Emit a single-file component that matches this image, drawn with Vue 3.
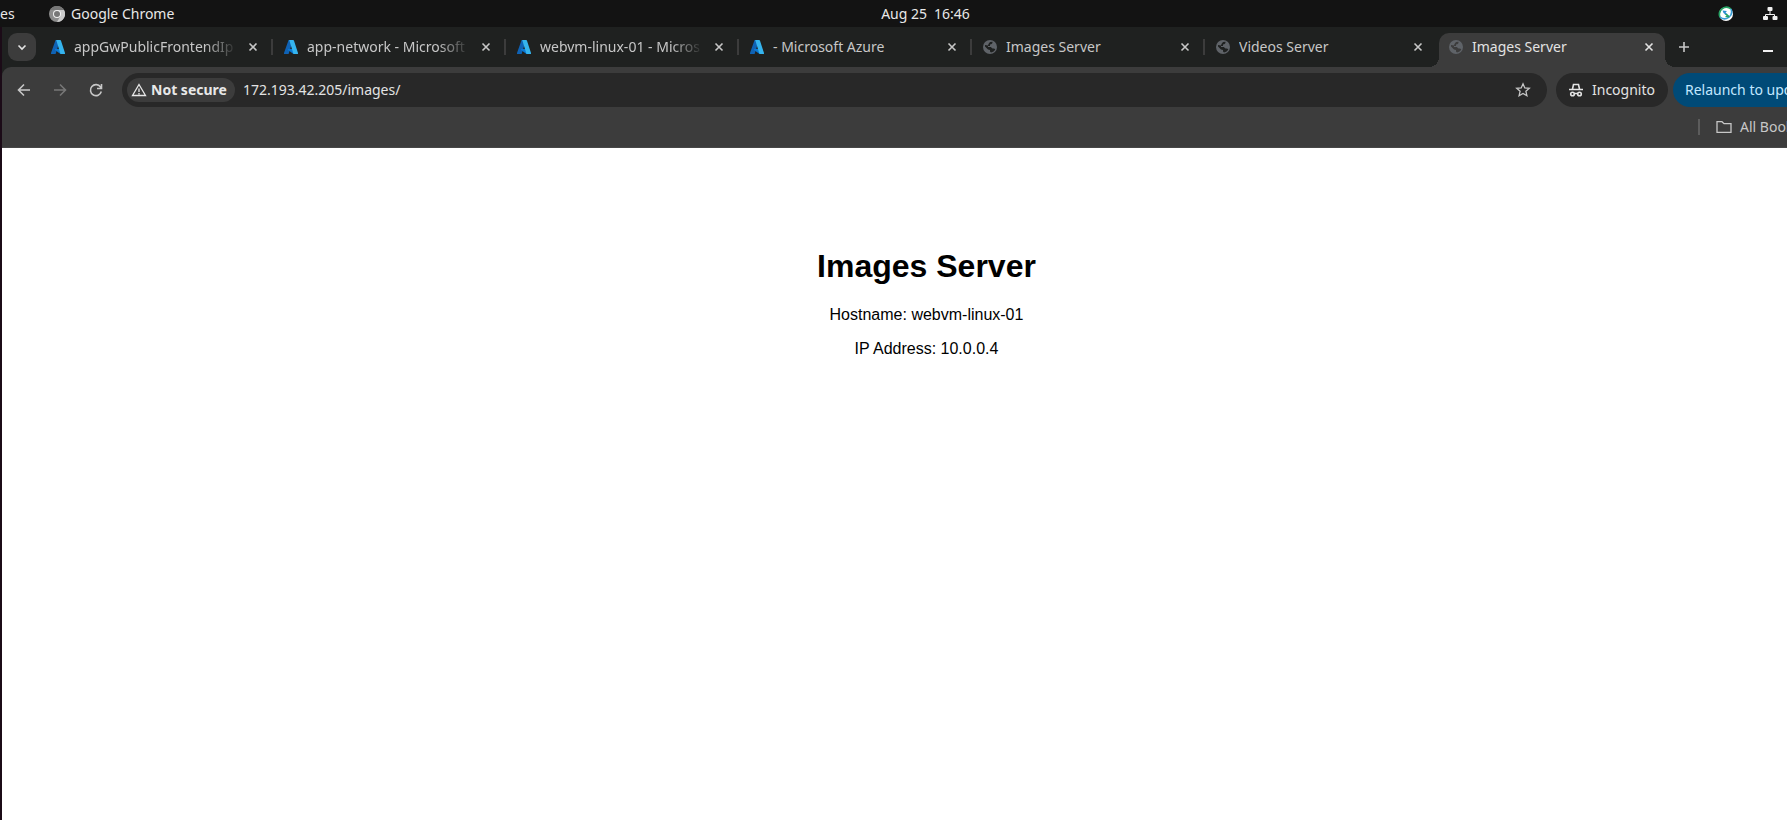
<script setup>
import { ref } from 'vue'

const address = ref('172.193.42.205/images/')
const tabs = [
  { title: 'appGwPublicFrontendIp', icon: 'azure', faded: true },
  { title: 'app-network - Microsoft', icon: 'azure', faded: true },
  { title: 'webvm-linux-01 - Micros', icon: 'azure', faded: true },
  { title: '- Microsoft Azure', icon: 'azure' },
  { title: 'Images Server', icon: 'globe' },
  { title: 'Videos Server', icon: 'globe', beforeActive: true },
  { title: 'Images Server', icon: 'globe', active: true },
]
</script>

<template>
  <div class="screen">
    <div class="desktop">
      <header class="system-bar">
        <div class="system-left">
          <span class="activities">es</span>
          <svg class="chrome-logo" viewBox="0 0 16 16" aria-hidden="true">
            <circle cx="8" cy="8" r="8" fill="#8c8c8c" />
            <path d="M8 4h7A8 8 0 0 1 8 16l3.5-6z" fill="#c9c9c9" />
            <path d="M1 4a8 8 0 0 1 14 0H8z" fill="#777" />
            <circle cx="8" cy="8" r="4" fill="#f2f2f2" />
            <circle cx="8" cy="8" r="3" fill="#777" />
          </svg>
          <span>Google Chrome</span>
        </div>
        <time class="clock"><span>Aug 25</span><span>16:46</span></time>
        <div class="system-right">
          <svg class="tray-sync" viewBox="0 0 16 16" aria-hidden="true">
            <circle cx="8" cy="8" r="7" fill="#fff" />
            <path d="M2 11A7 7 0 0 1 13 3" fill="none" stroke="#27a566" stroke-width="1.6" />
            <path d="M13 3A7 7 0 0 1 2 11" fill="none" stroke="#3a9fd6" stroke-width="1.6" />
            <path d="M4.500 4.500L9 5 7.500 6.500 10 8.500H7.500L5.500 7z" fill="#2b8fd0" />
            <path d="M11.500 11.500L7 11l1.500-1.500L6.500 8H9l2 1.500z" fill="#27a566" />
          </svg>
          <svg class="tray-net" viewBox="0 0 16 16" aria-hidden="true">
            <path d="M8 5v3.500M3.500 11V8.500h9V11" fill="none" stroke="#f2f2f2" />
            <rect x="5.500" y="1" width="5" height="4" rx="1" fill="#f2f2f2" />
            <rect x="1" y="10" width="5" height="4" rx="1" fill="#f2f2f2" />
            <rect x="10.500" y="10" width="5" height="4" rx="1" fill="#f2f2f2" />
          </svg>
        </div>
      </header>

      <div class="browser">
        <nav class="tab-strip" aria-label="Tabs">
          <button class="tab-search" aria-label="Search tabs">
            <svg viewBox="0 0 16 16" class="icon"><path d="M4.500 6.500L8 10l3.500-3.500" /></svg>
          </button>
          <div
            v-for="(tab, i) in tabs"
            :key="i"
            class="tab"
            :class="{ active: tab.active, plain: tab.beforeActive }"
          >
            <div class="tab-body">
              <svg v-if="tab.icon === 'azure'" class="favicon" viewBox="0 0 14 14" aria-hidden="true">
                <path d="M4.600 0H9L4.600 14H.8a.8.8 0 0 1-.8-1z" fill="#0f62b4" />
                <path d="M4 9h6l2 5H9.500L4 10z" fill="#0a78d4" />
                <path d="M5.200 0H9a1 1 0 0 1 1 .8L14 13a.8.8 0 0 1-.8 1H9.500z" fill="#35b4ee" />
              </svg>
              <svg v-else class="favicon" viewBox="0 0 14 14" aria-hidden="true">
                <circle cx="7" cy="7" r="7" class="globe" />
                <path
                  d="M9.500 1.800C9.800 3.500 8.500 4.500 7 4.500V6H5v1h3l1.500 1.500H11l1.300.8C11.500 11 10 12.200 8 12.500L7 11.500V10L5 9.500 2 6.500V5l3 .5L5.500 4 7 2z"
                  class="land"
                />
                <path d="M7.500 5.500L10 4.500l2 1.500-1 2H9z" class="globe" />
              </svg>
              <a href="#" class="tab-title" :class="{ faded: tab.faded }">{{ tab.title }}</a>
              <button class="tab-close" :aria-label="'Close ' + tab.title">
                <svg viewBox="0 0 16 16" class="icon"><path d="M4.500 4.500l7 7M11.500 4.500l-7 7" /></svg>
              </button>
            </div>
          </div>
          <button class="new-tab" aria-label="New tab">
            <svg viewBox="0 0 16 16" class="icon"><path d="M8 3v10M3 8h10" /></svg>
          </button>
          <button class="minimize" aria-label="Minimize"><span></span></button>
        </nav>

        <div class="toolbar">
          <div class="nav-buttons">
            <button aria-label="Back">
              <svg viewBox="0 0 16 16" class="icon"><path d="M14 8H3M8 2.500L2.500 8 8 13.500" /></svg>
            </button>
            <button aria-label="Forward" disabled>
              <svg viewBox="0 0 16 16" class="icon"><path d="M2 8h11M8 2.500L13.500 8 8 13.500" /></svg>
            </button>
            <button aria-label="Reload">
              <svg viewBox="0 0 16 16" class="icon"><path d="M13.300 9.500A5.500 5.500 0 1 1 12.500 5L13.500 6M13.500 2v4.500H9" /></svg>
            </button>
          </div>
          <div class="omnibox">
            <button class="security">
              <svg viewBox="0 0 16 16" class="icon thin"><path d="M8 2.500L14.500 13.500h-13zM8 6.500v3.500M8 11v1.500" /></svg>
              <span>Not secure</span>
            </button>
            <input v-model="address" class="address" aria-label="Address" spellcheck="false" />
            <button class="star" aria-label="Bookmark this page">
              <svg viewBox="0 0 16 16" class="icon thin"><path d="M8 1.800l1.800 4.100 4.500.4-3.400 3 1 4.400L8 11.400l-3.900 2.300 1-4.400-3.400-3 4.500-.4z" /></svg>
            </button>
          </div>
          <button class="incognito">
            <svg viewBox="0 0 16 16" class="icon">
              <path d="M4.500 7L5.500 2.500h5L11.500 7M1 7.500h14M6 11.500h4" />
              <circle cx="4.500" cy="12" r="1.800" /><circle cx="11.500" cy="12" r="1.800" />
            </svg>
            <span>Incognito</span>
          </button>
          <button class="relaunch">Relaunch to update</button>
        </div>

        <div class="bookmarks">
          <button class="all-bookmarks">
            <svg viewBox="0 0 16 16" class="icon thin"><path d="M1 2.700h5l2 2h7v8.600H1z" /></svg>
            <span>All Bookmarks</span>
          </button>
        </div>

        <main class="page">
          <h1>Images Server</h1>
          <p>Hostname: webvm-linux-01</p>
          <p>IP Address: 10.0.0.4</p>
        </main>
      </div>
    </div>
  </div>
</template>

<style>
body {
  background: #fff;
}
</style>

<style scoped>
.screen {
  overflow: hidden;
  min-height: 100vh;
  display: flex;
}
.desktop {
  flex: 1;
  margin-right: -64px;
  display: flex;
  flex-direction: column;
  font: 14px/20px "Noto Sans", "Open Sans", sans-serif;
  color: #e8e8e8;
  background: #1b0b17;
}
button {
  border: 0;
  padding: 0;
  margin: 0;
  background: none;
  color: inherit;
  font: inherit;
  display: flex;
  align-items: center;
  justify-content: center;
  flex: none;
  white-space: nowrap;
}
.icon {
  width: 16px;
  height: 16px;
  flex: none;
  fill: none;
  stroke: currentColor;
  stroke-width: 1.6;
}
.icon.thin {
  stroke-width: 1.3;
}
.system-bar {
  height: 27px;
  display: grid;
  grid-template-columns: 1fr auto 1fr;
  align-items: center;
  background: #131313;
}
.system-left {
  display: flex;
  align-items: center;
}
.activities {
  width: 49px;
}
.chrome-logo {
  width: 16px;
  height: 16px;
  margin-right: 6px;
}
.clock {
  display: flex;
  gap: 7px;
}
.system-right {
  display: flex;
  justify-content: flex-end;
  align-items: center;
  gap: 28px;
  padding-right: 73px;
}
.tray-sync,
.tray-net {
  width: 16px;
  height: 16px;
}
.browser {
  flex: 1;
  margin-left: 2px;
  display: flex;
  flex-direction: column;
  background: #1f2120;
}
.tab-strip {
  height: 40px;
  display: flex;
  align-items: flex-end;
  color: #c7c7c7;
}
.tab-search {
  width: 28px;
  height: 28px;
  margin: 0 5px 6px 6px;
  border-radius: 9px;
  background: #3c3c3c;
  color: #e3e3e3;
}
.tab {
  flex: none;
  width: 233px;
  height: 34px;
  position: relative;
}
.tab:not(.active):not(.plain)::after {
  content: "";
  position: absolute;
  right: 1px;
  top: 6px;
  width: 2px;
  height: 16px;
  background: #3c3c3c;
}
.tab-body {
  width: 228px;
  height: 34px;
  padding: 0 8px 6px 10px;
  box-sizing: border-box;
  display: flex;
  align-items: center;
}
.active .tab-body {
  width: 226px;
  background: #3c3c3c;
  border-radius: 10px 10px 0 0;
  color: #e3e3e3;
}
.active .tab-body::before,
.active .tab-body::after {
  content: "";
  position: absolute;
  bottom: 0;
  width: 10px;
  height: 10px;
}
.active .tab-body::before {
  left: -10px;
  background: radial-gradient(circle at 0 0, transparent 10px, #3c3c3c 10px);
}
.active .tab-body::after {
  left: 226px;
  background: radial-gradient(circle at 100% 0, transparent 10px, #3c3c3c 10px);
}
.favicon {
  width: 14px;
  height: 14px;
  flex: none;
  margin-right: 9px;
}
.globe {
  fill: #5f6368;
}
.land {
  fill: #1f2120;
}
.active .land {
  fill: #3c3c3c;
}
.tab-title {
  flex: 1;
  min-width: 0;
  overflow: hidden;
  white-space: nowrap;
  color: inherit;
  text-decoration: none;
  margin-right: 8px;
}
.faded {
  mask-image: linear-gradient(to left, transparent, #000 32px);
}
.tab-close {
  width: 16px;
  height: 16px;
}
.new-tab {
  width: 24px;
  height: 28px;
  margin-bottom: 6px;
}
.minimize {
  width: 28px;
  height: 28px;
  margin: 0 0 6px 58px;
}
.minimize span {
  width: 10px;
  height: 2px;
  margin-top: 8px;
  background: #f0f0f0;
}
.toolbar {
  height: 46px;
  padding-left: 8px;
  display: flex;
  align-items: center;
  background: #3c3c3c;
  border-top-left-radius: 9px;
}
.nav-buttons {
  display: flex;
  gap: 8px;
  margin-right: 12px;
  color: #c7c7c7;
}
.nav-buttons button {
  width: 28px;
  height: 28px;
}
.nav-buttons button:disabled {
  color: #777;
}
.omnibox {
  flex: 1;
  height: 34px;
  min-width: 0;
  padding: 0 16px 0 5px;
  box-sizing: border-box;
  display: flex;
  align-items: center;
  border-radius: 17px;
  background: #282828;
}
.security {
  height: 24px;
  padding: 0 8px 0 4px;
  gap: 4px;
  border-radius: 12px;
  background: #3c3c3c;
  font-weight: 700;
}
.address {
  flex: 1;
  min-width: 0;
  margin-left: 8px;
  padding: 0;
  border: 0;
  outline: 0;
  background: none;
  font: inherit;
  color: #e3e3e3;
}
.star {
  color: #c7c7c7;
}
.incognito {
  height: 34px;
  margin-left: 9px;
  padding: 0 13px 0 12px;
  gap: 8px;
  border-radius: 17px;
  background: #282828;
  color: #e3e3e3;
}
.relaunch {
  height: 34px;
  width: 178px;
  padding-left: 12px;
  justify-content: flex-start;
  margin-left: 5px;
  border-radius: 17px;
  background: #004a77;
  color: #c2e7ff;
}
.bookmarks {
  height: 35px;
  box-sizing: border-box;
  display: flex;
  justify-content: flex-end;
  align-items: flex-start;
  padding-top: 4px;
  background: #3c3c3c;
  border-bottom: 1px solid #474747;
}
.all-bookmarks {
  width: 153px;
  justify-content: flex-start;
  gap: 8px;
  color: #c7c7c7;
}
.all-bookmarks::before {
  content: "";
  width: 2px;
  height: 16px;
  margin-right: 8px;
  background: #5c5c5c;
}
.page {
  flex: 1;
  padding-top: 100px;
  text-align: center;
  color: #000;
  background: #fff;
  font: 16px/18px "Liberation Sans", Arial, sans-serif;
}
h1 {
  margin: 0 0 21px;
  font-size: 32px;
  line-height: 37px;
}
p {
  margin: 0 0 16px;
}
</style>
